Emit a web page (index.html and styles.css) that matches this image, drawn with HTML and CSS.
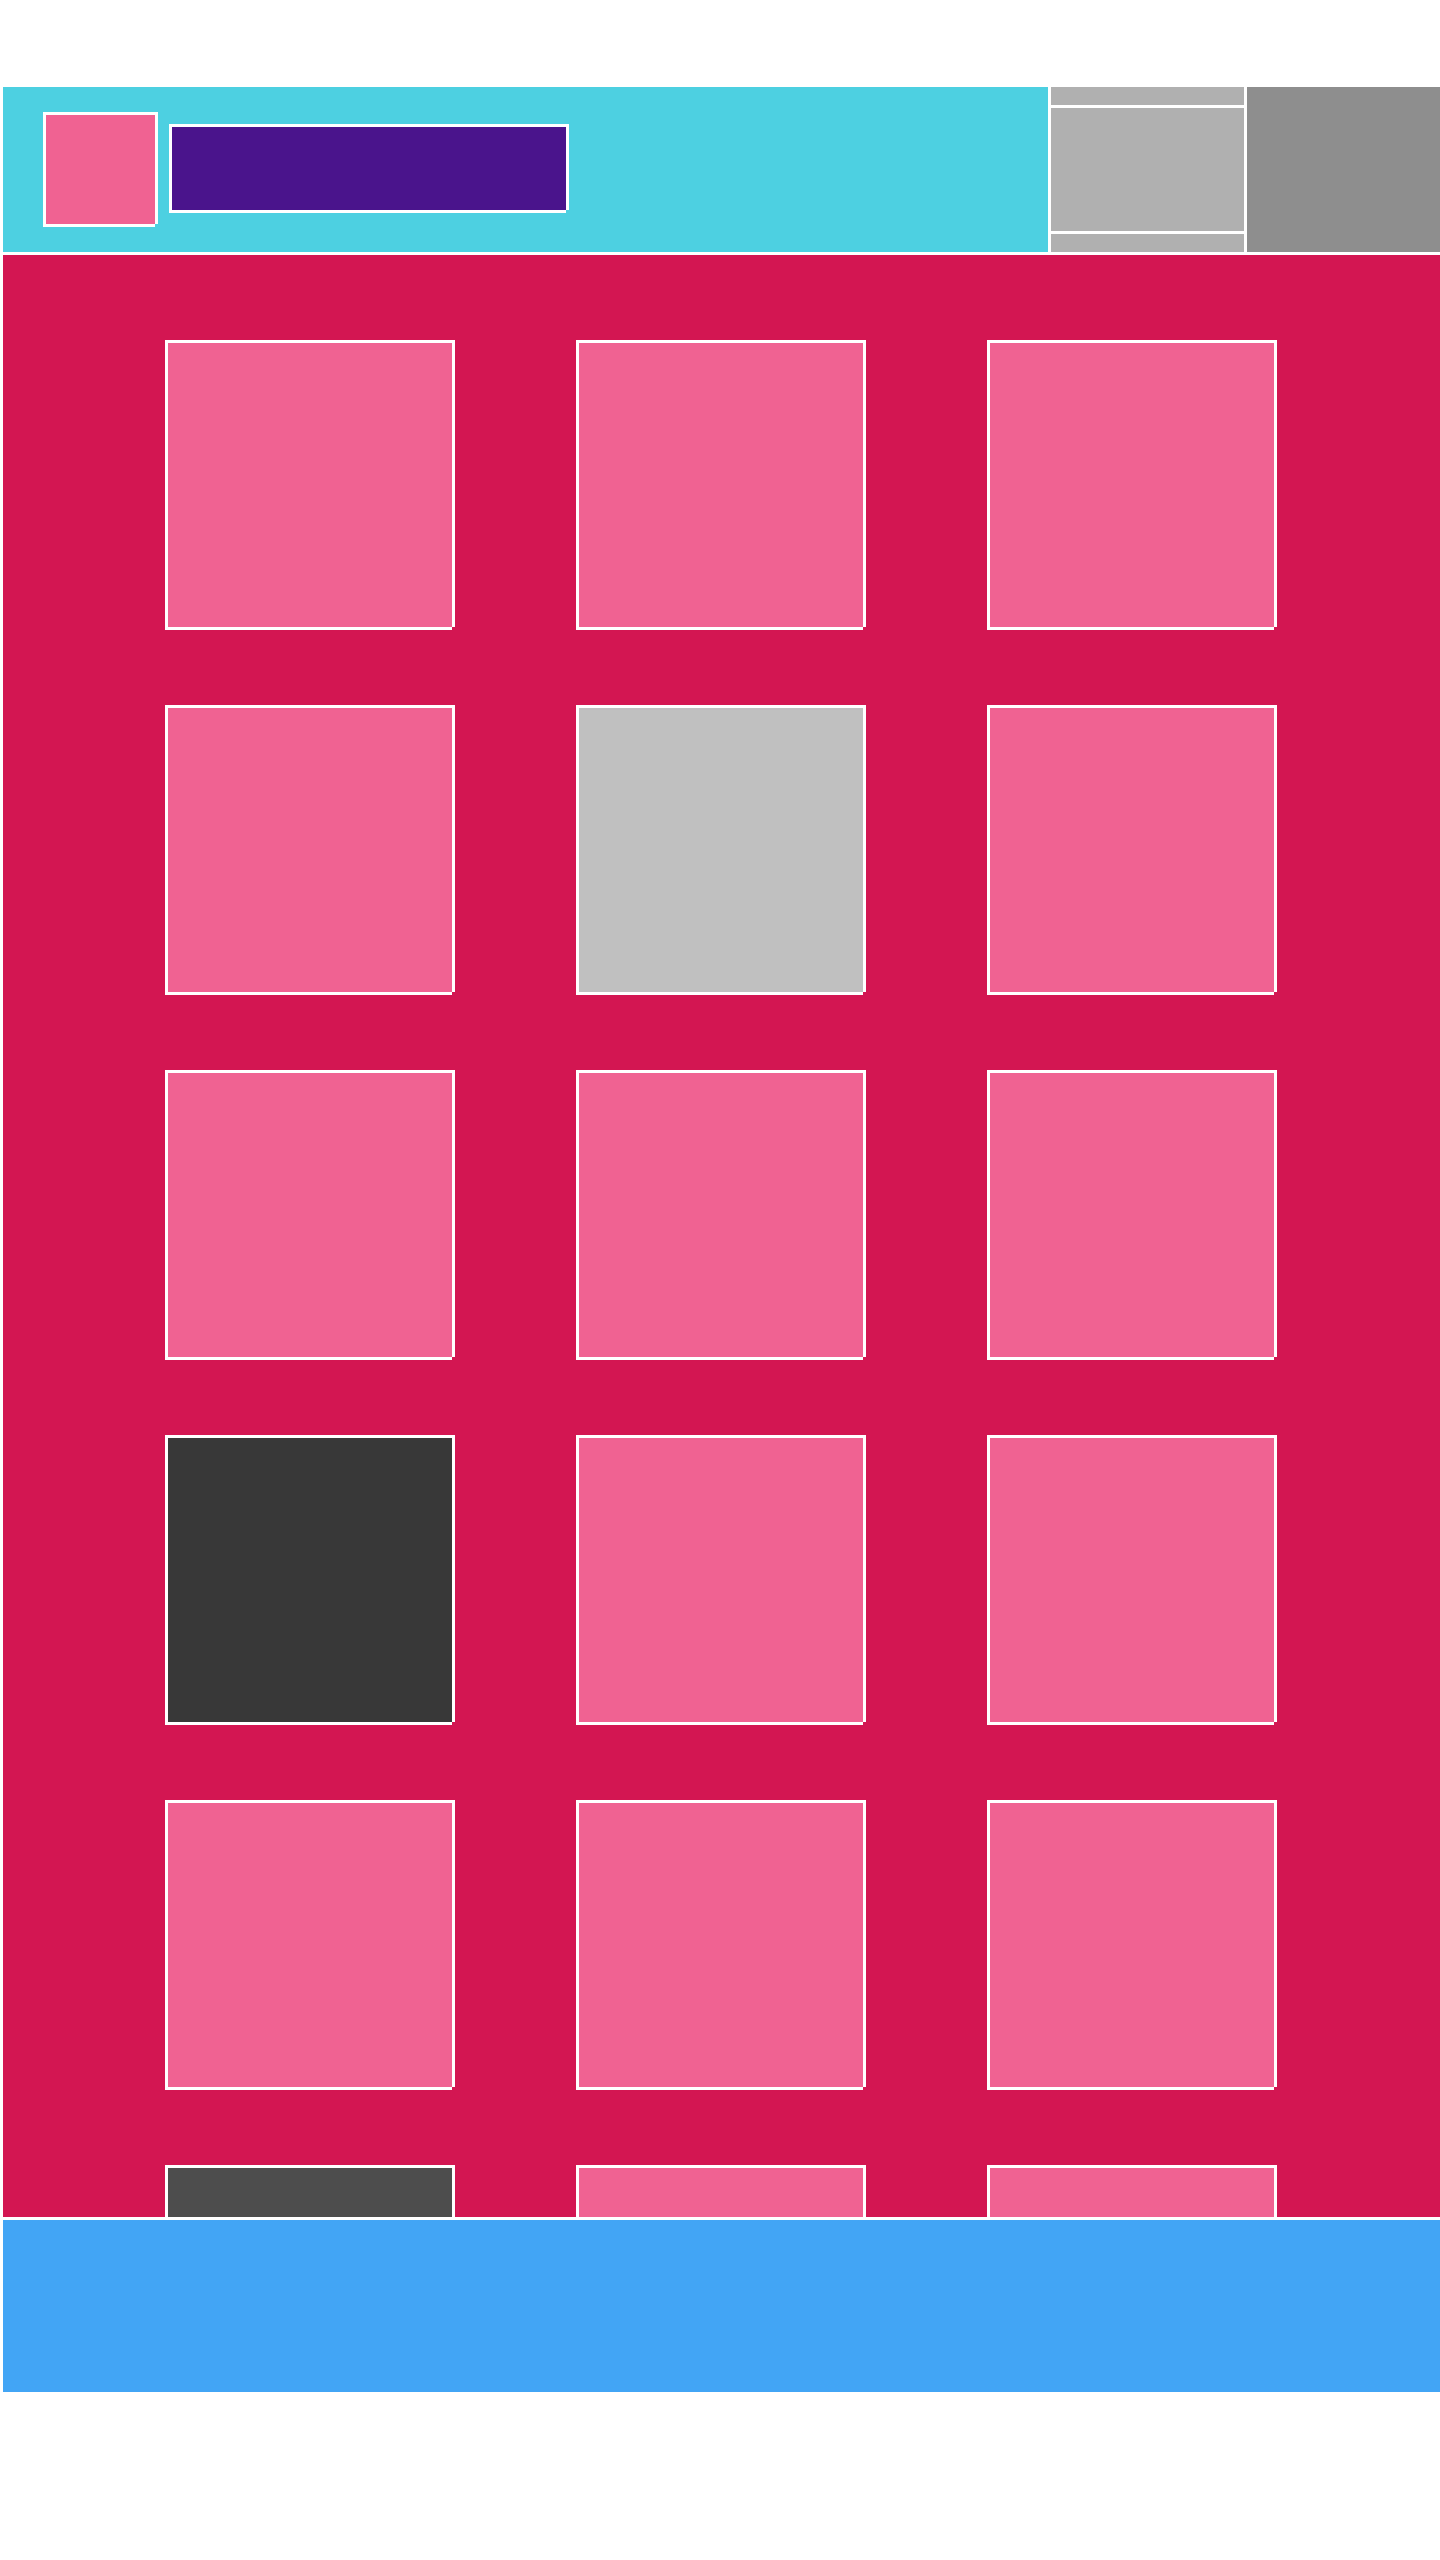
FILE: index.html
```html
<!DOCTYPE html>
<html lang="en">
<head>
<meta charset="utf-8">
<title>Layout</title>
<link rel="stylesheet" href="styles.css">
</head>
<body>
<div class="page">
  <header class="topbar">
    <div class="brand">
      <div class="logo framed"></div>
      <div class="title framed"></div>
    </div>
    <div class="side-stack">
      <div class="stack-cap"></div>
      <div class="stack-main"></div>
      <div class="stack-cap"></div>
    </div>
    <div class="side-block"></div>
  </header>
  <main class="content">
    <div class="grid">
      <div class="tile framed"></div>
      <div class="tile framed"></div>
      <div class="tile framed"></div>

      <div class="tile framed"></div>
      <div class="tile framed tile-silver"></div>
      <div class="tile framed"></div>

      <div class="tile framed"></div>
      <div class="tile framed"></div>
      <div class="tile framed"></div>

      <div class="tile framed tile-dark"></div>
      <div class="tile framed"></div>
      <div class="tile framed"></div>

      <div class="tile framed"></div>
      <div class="tile framed"></div>
      <div class="tile framed"></div>

      <div class="tile framed tile-charcoal"></div>
      <div class="tile framed"></div>
      <div class="tile framed"></div>
    </div>
  </main>
  <footer class="footer"></footer>
</div>
</body>
</html>
```

FILE: styles.css
```css
html, body {
  margin: 0;
  padding: 0;
  background: #ffffff;
}

.page {
  margin: 87px 0 0 3px;
  width: 1437px;
  display: flex;
  flex-direction: column;
  gap: 3px;
  background: #ffffff;
}

.framed {
  box-sizing: border-box;
  border: 3px solid #ffffff;
  clip-path: polygon(0 0, 100% 0, 100% calc(100% - 3px), calc(100% - 3px) calc(100% - 3px), calc(100% - 3px) 100%, 0 100%);
}

/* header */
.topbar {
  height: 165px;
  display: flex;
  gap: 3px;
}

.brand {
  flex: 1;
  background: #4dd0e1;
  display: flex;
  align-items: flex-start;
  padding-left: 40px;
  gap: 11px;
}

.logo {
  width: 115px;
  height: 115px;
  margin-top: 25px;
  background: #f06292;
}

.title {
  width: 400px;
  height: 89px;
  margin-top: 37px;
  background: #4a148c;
}

.side-stack {
  width: 193px;
  display: flex;
  flex-direction: column;
  gap: 3px;
}

.stack-cap {
  height: 18px;
  background: #b0b0b0;
}

.stack-main {
  flex: 1;
  background: #b0b0b0;
}

.side-block {
  width: 193px;
  background: #8e8e8e;
}

/* main */
.content {
  height: 1962px;
  box-sizing: border-box;
  background: #d31652;
  overflow: hidden;
  padding: 85px 0 0 162px;
}

.grid {
  display: grid;
  grid-template-columns: repeat(3, 290px);
  column-gap: 121px;
  row-gap: 75px;
}

.tile {
  width: 290px;
  height: 290px;
  background: #f06292;
}

.tile-silver {
  background: #c0c0c0;
}

.tile-dark {
  background: #383838;
}

.tile-charcoal {
  background: #4d4d4d;
}

/* footer */
.footer {
  height: 172px;
  background: #42a5f5;
}
```
